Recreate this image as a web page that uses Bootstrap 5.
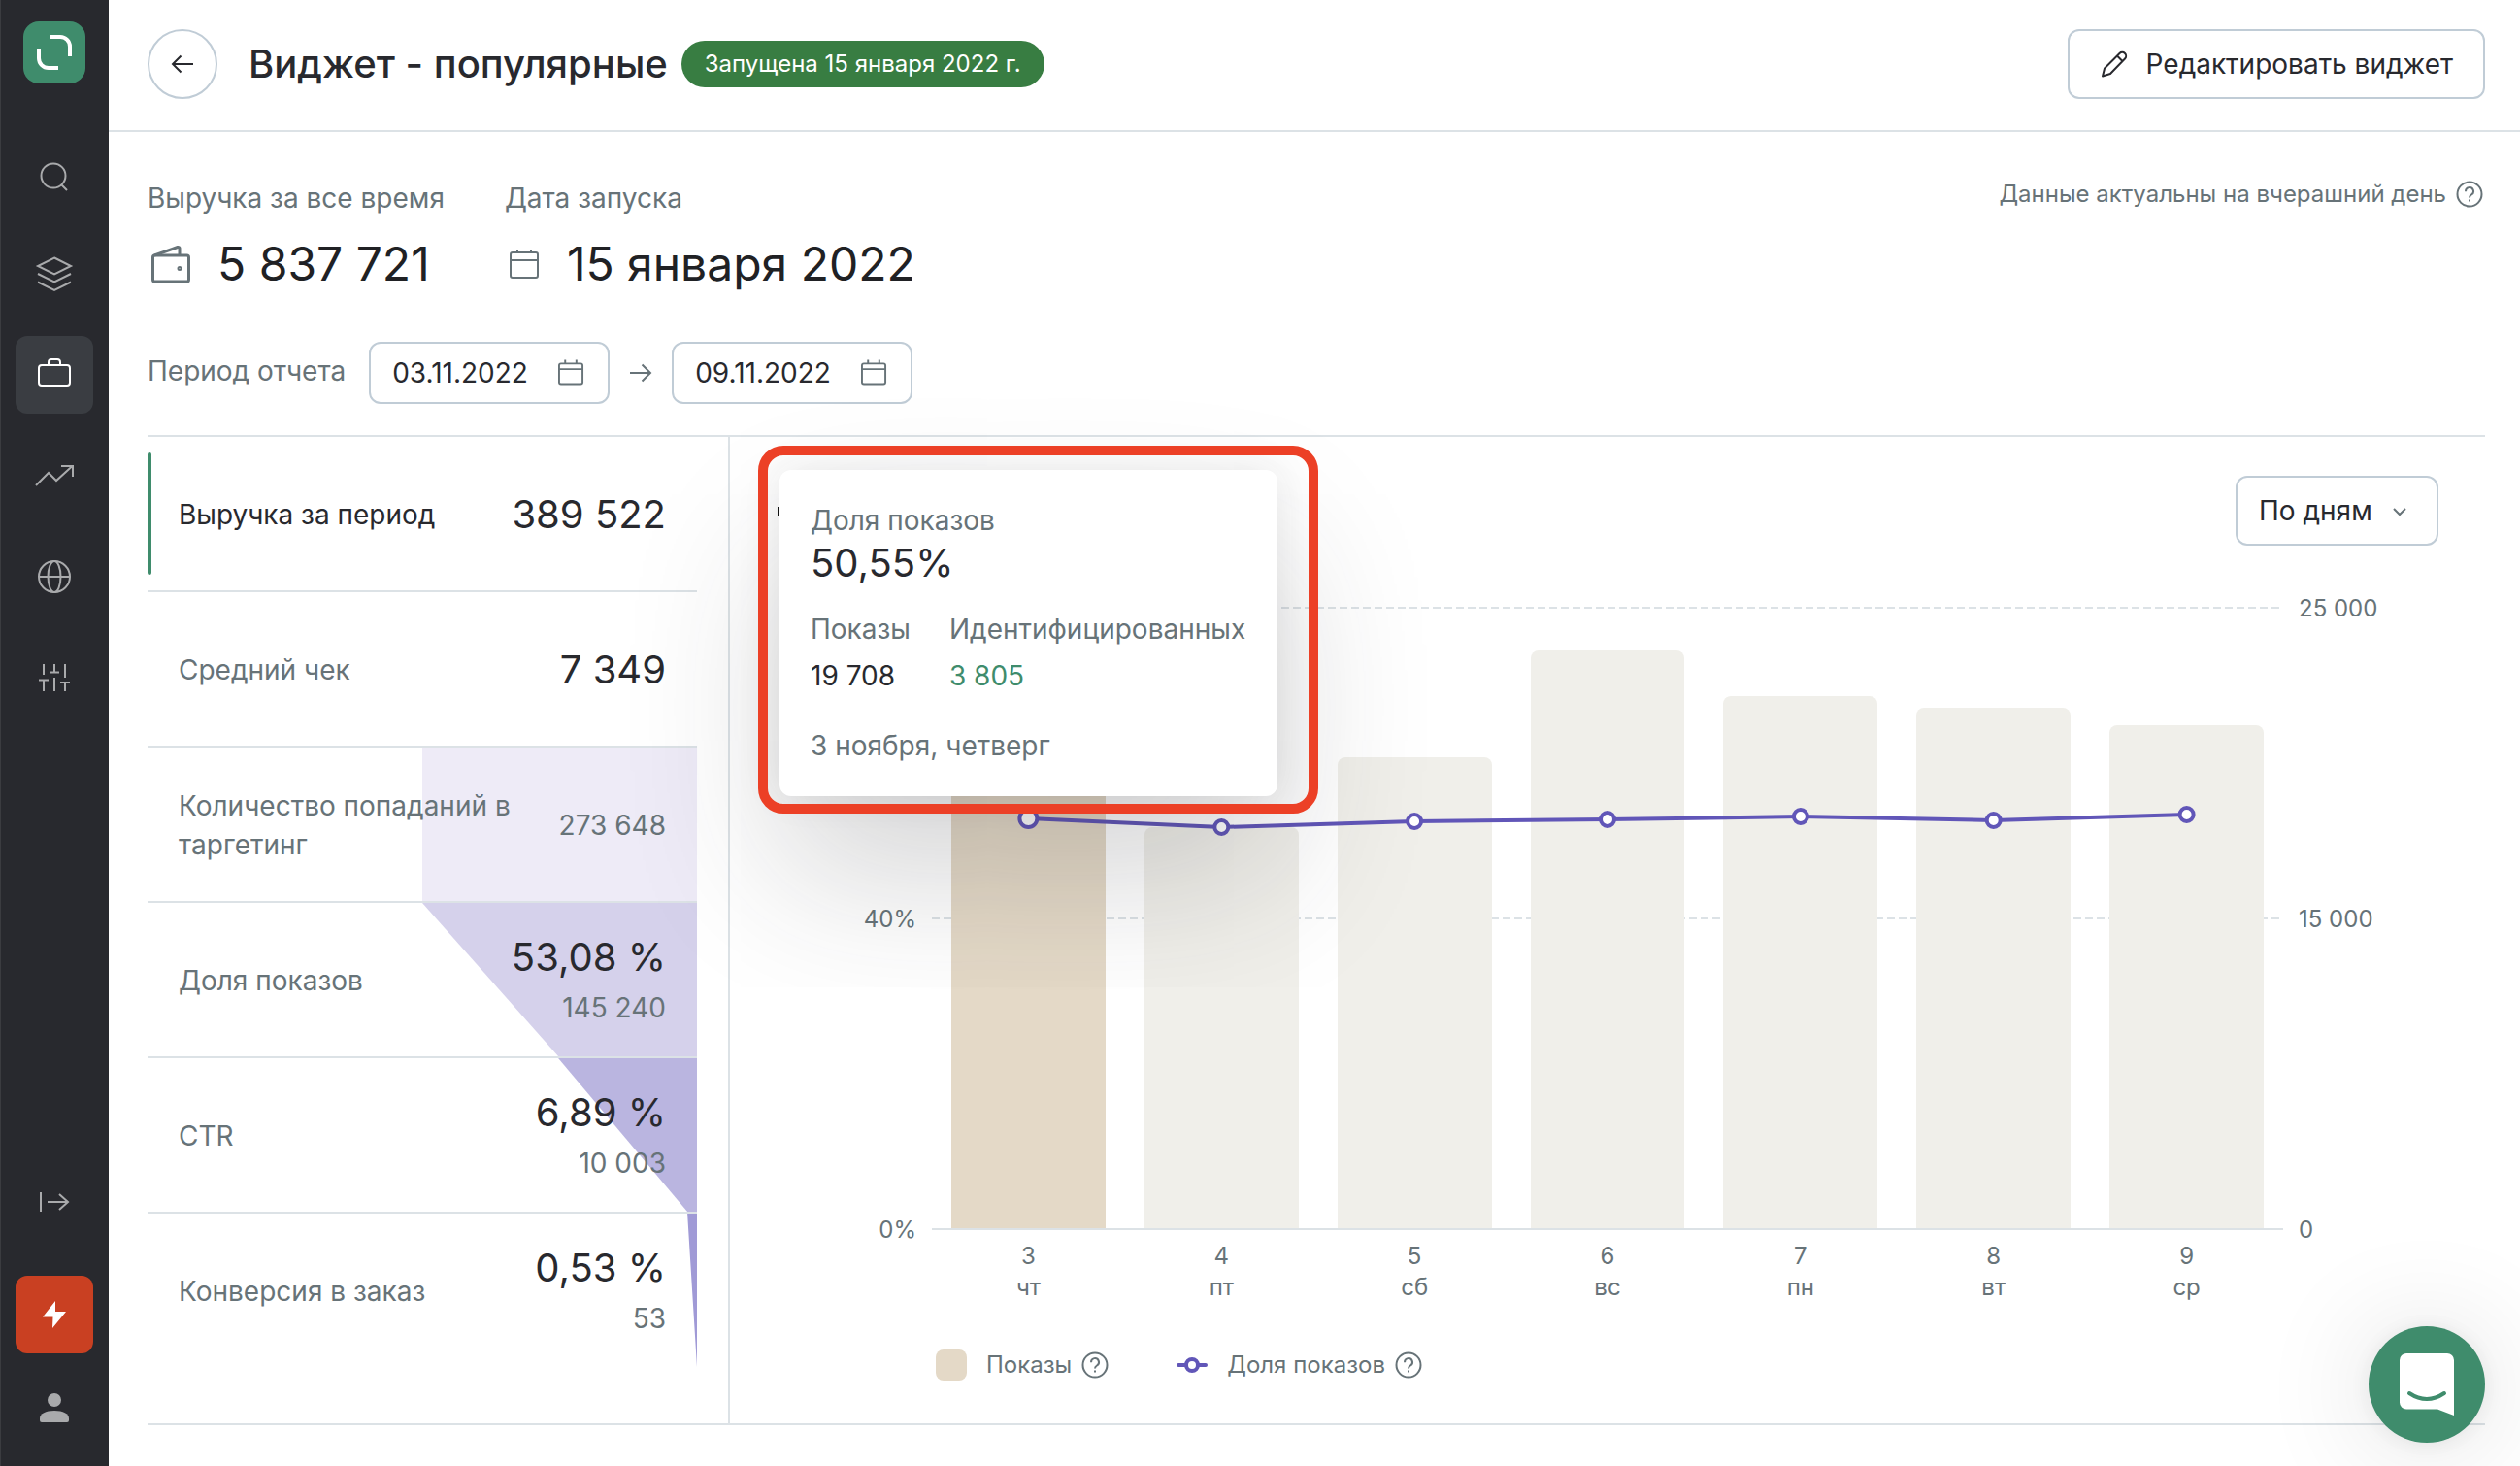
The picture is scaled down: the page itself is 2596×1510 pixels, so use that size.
<!DOCTYPE html>
<html lang="ru">
<head>
<meta charset="utf-8">
<meta name="viewport" content="width=device-width, initial-scale=1">
<title>Виджет - популярные</title>
<link href="https://cdn.jsdelivr.net/npm/bootstrap@5.3.0/dist/css/bootstrap.min.css" rel="stylesheet">
<style>
:root{--ink:#28292e;--muted-ink:#677378;--rule:#dce2e6;--edge:#c0ccd6;--brand:#3f8c6c}
body{font-family:Inter,"Noto Sans",sans-serif;font-size:28px;line-height:40px;color:var(--ink);background:#fff}
svg{display:block;flex:none;overflow:visible;fill:none;stroke:currentColor;stroke-width:2}
.tone{color:var(--muted-ink)}
.t24{font-size:24px;line-height:32px}
.t40{font-size:40px;line-height:48px}
.side-nav{width:112px;background:#28292e;color:#a9aaac;border-left:1px solid #3b3c40;padding:22px 16px 20px 15px}
.side-nav a{color:inherit;width:80px;height:80px;border-radius:12px}
.side-nav .logo-tile{width:64px;height:64px;border-radius:16px;background:var(--brand);color:#fff;margin-bottom:52px}
.side-nav .nav-set{gap:24px}
.side-nav .is-on{background:#3a3d42;color:#fff}
.side-nav .hot{background:#c94022;color:#fff;margin-top:20px}
.side-bottom{gap:16px}
.top-bar{height:136px;border-bottom:2px solid var(--rule);padding:0 36px 2px 40px}
.back-btn{width:72px;height:72px;border:2px solid var(--edge);color:var(--ink)}
.top-bar h1{font-size:40px;line-height:48px;font-weight:500;margin:0 14px 0 32px}
.state-pill{background:#387d42;color:#fff;padding:8px 24px;font-size:24px;line-height:32px;border-radius:24px}
.edit-btn{height:72px;border:2px solid var(--edge);border-radius:12px;font-size:28px;color:var(--ink);padding:0 31px;gap:16px}
.page-body{padding:48px 36px 40px 40px}
.big-num{font-size:48px;line-height:56px;color:#202124}
.big-num svg{margin-right:28px}
.stat-set{gap:62px;margin-bottom:52px}
.help-ic{margin:0 2px 0 10px}
.date-field{width:248px;height:64px;border:2px solid var(--edge);border-radius:12px;padding:0 24px 0 22px}
.date-field input{border:0;outline:0;padding:0;width:144px;font-size:28px;color:var(--ink);background:none}
.report{margin-top:32px;border-top:2px solid var(--rule);border-bottom:2px solid var(--rule)}
.metric-list{width:566px;margin-right:32px}
.metric{height:160px;border-bottom:2px solid var(--rule);padding:2px 32px 0 32px;position:relative;color:var(--muted-ink);text-align:left}
.metric:last-child{border-bottom-color:transparent}
.metric>*{position:relative}
.metric .t40{color:var(--ink);line-height:56px}
.metric .num2{line-height:48px}
.metric.is-on{color:var(--ink)}
.metric.is-on::before{content:"";position:absolute;left:0;top:16px;bottom:16px;width:4px;border-radius:2px;background:var(--brand)}
.metric .slice{position:absolute;top:0;bottom:0;right:0;width:50%}
.slice-1{background:#eeebf7}
.slice-2{background:#d5d1eb;clip-path:polygon(0 0,100% 0,100% 100%,49.5% 100%)}
.slice-3{background:#bab5e0;clip-path:polygon(49.5% 0,100% 0,100% 100%,96.5% 100%)}
.slice-4{background:#a09ad6;clip-path:polygon(96.5% 0,100% 0,100% 100%)}
.chart-panel{border-left:2px solid var(--rule);padding:40px 0 44px;position:relative}
.mode-box{width:209px;height:72px;margin:0 48px 64px 0;position:relative}
.mode-box select{appearance:none;width:100%;height:100%;border:2px solid var(--edge);border-radius:12px;background:#fff;padding:0 22px;font-size:28px;color:var(--ink)}
.mode-box svg{position:absolute;right:33px;top:33px;pointer-events:none}
.axis-col{width:208px;margin:-15px 0 -17px}
.axis-col span{height:32px}
.axis-col.lft{padding-right:16px;text-align:right}
.axis-col.rgt{padding-left:16px}
.plot{height:640px;position:relative}
.plot>svg{position:absolute;left:0;top:0;width:100%;height:100%}
.bars{position:relative;height:100%}
.bars>div{flex:1;padding:0 20px}
.bars i{display:block;background:#f0efea;border-radius:8px 8px 0 0}
.bars .is-on i{background:#e4d9c7}
.days{margin:12px 208px 48px}
.days>div{flex:1;text-align:center}
.legend-row{padding-left:212px;height:32px;gap:68px}
.swatch{width:32px;height:32px;border-radius:8px;background:#e4d9c7}
.tip{position:absolute;left:51px;top:34px;min-width:513px;background:#fff;border-radius:12px;padding:32px;box-shadow:0 0 40px rgba(40,41,46,.09),0 80px 160px rgba(40,41,46,.2);z-index:2}
.tip-frame{position:absolute;left:29px;top:9px;width:577px;height:379px;border:10px solid #ec4026;border-radius:26px;z-index:3;pointer-events:none}
.tip .pair{gap:40px}
.tip .ident{color:var(--brand)}
.title-edge{position:absolute;left:49px;top:72px;width:4px;height:9px;background:#111}
.chat-btn{position:fixed;right:36px;bottom:24px;width:120px;height:120px;border:0;background:var(--brand);color:#fff;box-shadow:0 4px 120px rgba(0,0,0,.14),0 2px 24px rgba(0,0,0,.08);z-index:5}
</style>
<script src="https://cdn.jsdelivr.net/npm/bootstrap@5.3.0/dist/js/bootstrap.bundle.min.js"></script>
</head>
<body>
<svg width="0" height="0" class="position-absolute" aria-hidden="true">
  <symbol id="i-cal" viewBox="0 0 28 28" overflow="visible"><rect x="1" y="4" width="25" height="23" rx="2"/><path d="M1 10h25M7.500 0v4M19.500 0v4"/></symbol>
  <symbol id="i-help" viewBox="0 0 28 28" overflow="visible"><circle cx="14" cy="14" r="12.500"/><path d="M10 11.200a4 4 0 1 1 6 3.300c-1.500.9-2 1.400-2 3"/><path d="M14 19.500v2"/></symbol>
</svg>
<div class="d-flex min-vh-100">
  <nav class="side-nav d-flex flex-column align-items-center flex-shrink-0">
    <a class="logo-tile d-flex align-items-center justify-content-center" href="#" aria-label="Главная"><svg width="36" height="36" style="stroke-width:4"><path d="M14 2h10a10 10 0 0 1 10 10v10M2 14v10a10 10 0 0 0 10 10h10"/></svg></a>
    <div class="nav-set d-flex flex-column">
      <a class="d-flex align-items-center justify-content-center" href="#" aria-label="Поиск"><svg class="mt-2" width="30" height="30"><circle cx="14" cy="14" r="12.500"/><path d="M22 23l6 6"/></svg></a>
      <a class="d-flex align-items-center justify-content-center" href="#" aria-label="Слои"><svg width="36" height="36"><path d="M18 1.500 35 10 18 18.500 1 10ZM1 18l17 8.500L35 18M1 26.500 18 35l17-8.500"/></svg></a>
      <a class="is-on d-flex align-items-center justify-content-center" href="#" aria-label="Кампании"><svg class="mb-1" width="34" height="30"><rect x="1" y="7" width="32" height="22" rx="3"/><path d="M11 7V4a3 3 0 0 1 3-3h6a3 3 0 0 1 3 3v3"/></svg></a>
      <a class="d-flex align-items-center justify-content-center" href="#" aria-label="Аналитика"><svg width="40" height="22"><path d="M1 21 14 8l8 8L38.500 1M27 1h12v11"/></svg></a>
      <a class="d-flex align-items-center justify-content-center" href="#" aria-label="Сайты"><svg width="34" height="34"><circle cx="17" cy="17" r="16"/><ellipse cx="17" cy="17" rx="6.500" ry="16"/><path d="M1 17h32"/></svg></a>
      <a class="d-flex align-items-center justify-content-center" href="#" aria-label="Настройки"><svg width="32" height="28"><path d="M5 0v11M0 16.500h10M5 16.500V28M16 0v8M11 8.500h10M16 14v14M27 0v14M22 19h10M27 19v9"/></svg></a>
    </div>
    <div class="side-bottom d-flex flex-column mt-auto">
      <a class="d-flex align-items-center justify-content-center" href="#" aria-label="Развернуть"><svg width="30" height="20"><path d="M1 0v20M8 10h21M20 2l9 8-9 8"/></svg></a>
      <a class="hot d-flex align-items-center justify-content-center" href="#" aria-label="Быстрые действия"><svg width="24" height="28"><path fill="currentColor" stroke="none" d="M13 0 0 16.500h10.500L10 28 24 11H13Z"/></svg></a>
      <a class="d-flex align-items-center justify-content-center" href="#" aria-label="Профиль"><svg width="30" height="30"><g fill="currentColor" stroke="none"><circle cx="15" cy="7" r="7"/><path d="M0 28v-2c0-5 6-8 15-8s15 3 15 8v2a2 2 0 0 1-2 2H2a2 2 0 0 1-2-2Z"/></g></svg></a>
    </div>
  </nav>

  <div class="flex-grow-1">
    <header class="top-bar d-flex align-items-center">
      <button class="back-btn btn rounded-circle p-0 d-flex align-items-center justify-content-center" aria-label="Назад"><svg width="22" height="18"><path d="M22 9H1M9.500 0.500 1 9l8.500 8.500"/></svg></button>
      <h1>Виджет - популярные</h1>
      <span class="state-pill">Запущена 15 января 2022 г.</span>
      <button class="edit-btn btn ms-auto d-flex align-items-center"><svg width="32" height="28"><path stroke-linejoin="round" d="M3 26.500 5 18.500 20.500 3a3.800 3.800 0 0 1 5.500 5.500L11 24Zm15-21 5.500 5.500"/></svg>Редактировать виджет</button>
    </header>

    <main class="page-body">
      <div class="d-flex justify-content-between align-items-start">
        <div class="stat-set d-flex">
          <div>
            <div class="tone mb-3 pb-1">Выручка за все время</div>
            <div class="big-num d-flex align-items-center"><svg class="tone ms-1" width="40" height="38" style="stroke-width:3"><rect x="1.500" y="10" width="37" height="27" rx="2"/><path d="M3 10 27 1.500a1.500 1.500 0 0 1 2 1.500v7"/><ellipse cx="29" cy="23.500" rx="1" ry="1"/></svg>5 837 721</div>
          </div>
          <div>
            <div class="tone mb-3 pb-1">Дата запуска</div>
            <div class="big-num d-flex align-items-center"><svg class="tone ms-1" width="32" height="30" viewBox="-1 0 32 30"><rect x="1" y="3" width="28" height="26" rx="2"/><path d="M1 11h28M8 0v3M22 0v3"/></svg>15 января 2022</div>
          </div>
        </div>
        <div class="t24 tone d-flex align-items-center">Данные актуальны на вчерашний день<svg class="help-ic" width="28" height="28"><use href="#i-help"/></svg></div>
      </div>

      <div class="d-flex align-items-center">
        <label for="from" class="tone pb-1 me-4">Период отчета</label>
        <div class="date-field d-flex align-items-center justify-content-between"><input id="from" type="text" value="03.11.2022"><svg class="tone" width="27" height="28"><use href="#i-cal"/></svg></div>
        <svg class="tone mx-3 px-1" width="32" height="18" viewBox="-1 0 24 18"><path d="M0 9h21M12.500 0.500 21 9l-8.500 8.500"/></svg>
        <div class="date-field d-flex align-items-center justify-content-between"><input id="to" type="text" value="09.11.2022" aria-label="Конец периода"><svg class="tone" width="27" height="28"><use href="#i-cal"/></svg></div>
      </div>

      <section class="report d-flex">
        <div class="metric-list flex-shrink-0">
          <div class="metric is-on d-flex align-items-center justify-content-between"><span>Выручка за период</span><span class="t40">389 522</span></div>
          <div class="metric d-flex align-items-center justify-content-between"><span>Средний чек</span><span class="t40">7 349</span></div>
          <div class="metric d-flex align-items-center justify-content-between"><div class="slice slice-1"></div><span>Количество попаданий в таргетинг</span><span class="text-nowrap">273 648</span></div>
          <div class="metric d-flex align-items-center justify-content-between"><div class="slice slice-2"></div><span>Доля показов</span><div class="text-end"><div class="t40">53,08 %</div><div class="num2">145 240</div></div></div>
          <div class="metric d-flex align-items-center justify-content-between"><div class="slice slice-3"></div><span>CTR</span><div class="text-end"><div class="t40">6,89 %</div><div class="num2">10 003</div></div></div>
          <div class="metric d-flex align-items-center justify-content-between"><div class="slice slice-4"></div><span>Конверсия в заказ</span><div class="text-end"><div class="t40">0,53 %</div><div class="num2">53</div></div></div>
        </div>

        <div class="chart-panel flex-grow-1">
          <div class="d-flex justify-content-end">
            <div class="mode-box"><select aria-label="Группировка"><option>По дням</option></select><svg class="tone" width="14" height="8"><path d="M1 1l6 6 6-6"/></svg></div>
          </div>
          <div class="d-flex t24 tone">
            <div class="axis-col lft d-flex flex-column justify-content-between"><span></span><span>40%</span><span>0%</span></div>
            <div class="plot flex-grow-1">
              <svg color="#dce2e6"><g stroke-dasharray="8 4"><line x1="0" y1="0" x2="100%" y2="0"/><line x1="0" y1="50%" x2="100%" y2="50%"/></g></svg>
              <div class="bars d-flex align-items-end">
                <div class="is-on"><i style="height:504px"></i></div>
                <div><i style="height:414px"></i></div>
                <div><i style="height:486px"></i></div>
                <div><i style="height:596px"></i></div>
                <div><i style="height:549px"></i></div>
                <div><i style="height:537px"></i></div>
                <div><i style="height:519px"></i></div>
              </div>
              <svg color="#6156b8" style="stroke-width:4">
                <line x1="0" y1="100%" x2="100%" y2="100%" stroke="#dce2e6" stroke-width="2" style="stroke-width:2"/>
                <line x1="7.14%" y1="217" x2="21.43%" y2="226"/><line x1="21.43%" y1="226" x2="35.71%" y2="220"/><line x1="35.71%" y1="220" x2="50%" y2="218"/><line x1="50%" y1="218" x2="64.29%" y2="215"/><line x1="64.29%" y1="215" x2="78.57%" y2="219"/><line x1="78.57%" y1="219" x2="92.86%" y2="213"/>
                <g fill="#fff"><circle cx="7.14%" cy="217" r="9"/><circle cx="21.43%" cy="226" r="7"/><circle cx="35.71%" cy="220" r="7"/><circle cx="50%" cy="218" r="7"/><circle cx="64.29%" cy="215" r="7"/><circle cx="78.57%" cy="219" r="7"/><circle cx="92.86%" cy="213" r="7"/></g>
              </svg>
            </div>
            <div class="axis-col rgt d-flex flex-column justify-content-between"><span>25 000</span><span>15 000</span><span>0</span></div>
          </div>
          <div class="days d-flex t24 tone">
            <div>3<br>чт</div><div>4<br>пт</div><div>5<br>сб</div><div>6<br>вс</div><div>7<br>пн</div><div>8<br>вт</div><div>9<br>ср</div>
          </div>
          <div class="legend-row d-flex align-items-center t24 tone">
            <div class="d-flex align-items-center"><span class="swatch me-3"></span><span class="ps-1">Показы</span><svg class="help-ic" width="28" height="28"><use href="#i-help"/></svg></div>
            <div class="d-flex align-items-center"><svg class="me-3" width="32" height="16" color="#6156b8" style="stroke-width:4"><path stroke-linecap="round" d="M2 8h28"/><circle cx="16" cy="8" r="6" fill="#fff"/></svg><span class="ps-1">Доля показов</span><svg class="help-ic" width="28" height="28"><use href="#i-help"/></svg></div>
          </div>

          <span class="title-edge"></span>
          <div class="tip" role="tooltip">
            <div class="tone">Доля показов</div>
            <div class="t40">50,55%</div>
            <div class="pair d-flex mt-4">
              <div><div class="tone">Показы</div><div class="mt-2">19 708</div></div>
              <div><div class="tone">Идентифицированных</div><div class="mt-2 ident">3 805</div></div>
            </div>
            <div class="tone mt-4 pt-2">3 ноября, четверг</div>
          </div>
          <div class="tip-frame"></div>
        </div>
      </section>
    </main>
  </div>
</div>
<button class="chat-btn rounded-circle d-flex align-items-center justify-content-center p-0" aria-label="Чат"><svg width="56" height="64"><path fill="currentColor" stroke="none" d="M7 0h42a7 7 0 0 1 7 7v57l-17-6.500H7a7 7 0 0 1-7-7V7a7 7 0 0 1 7-7Z"/><path stroke="#3f8c6c" style="stroke-width:4" stroke-linecap="round" d="M10 41q18 12 36 0"/></svg></button>
</body>
</html>
